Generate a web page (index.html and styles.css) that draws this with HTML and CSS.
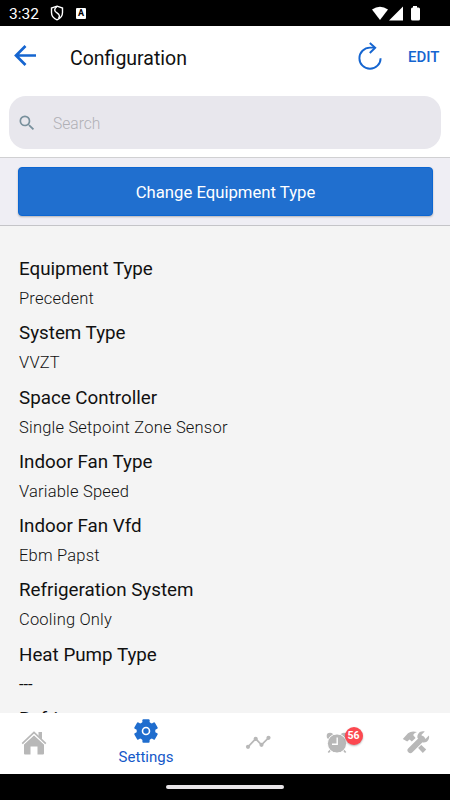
FILE: index.html
```html
<!DOCTYPE html>
<html lang="en">

<head>
    <meta charset="UTF-8">
    <meta name="viewport" content="width=device-width, initial-scale=1.0">
    <title>Configuration</title>
    <link rel="stylesheet" href="styles.css">
</head>

<body>
    <div class="statusbar">
        <span class="clock">3:32</span>
        <svg class="shield" width="14" height="16" viewBox="0 0 14 16" fill="none" stroke="#fff" stroke-width="1.4">
            <path d="M7 1.200 L12.500 3 V7.500 C12.500 11 10.200 13.600 7 14.800 C3.800 13.600 1.500 11 1.500 7.500 V3 Z" />
            <path d="M7 1.500 C3.800 4 4 6 7 7.800 C10 9.600 9.800 12 8.500 13.500" />
        </svg>
        <span class="a-icon">A</span>
        <svg class="signals" width="50" height="16" viewBox="0 0 50 16" fill="#fff">
            <path d="M0 3.500 Q8 -2.200 16 3.500 L8 14 Z" />
            <path d="M31 0.500 V14.500 H17 Z" />
            <path d="M41 0 H45 V1.500 H46.500 Q48 1.500 48 3 V13 Q48 14.500 46.500 14.500 H40.500 Q39 14.500 39 13 V3 Q39 1.500 40.500 1.500 H41 Z" />
        </svg>
    </div>

    <header class="toolbar">
        <svg class="back" width="23" height="21" viewBox="0 0 23 21" fill="none" stroke="#1565d0" stroke-width="2.700">
            <path d="M22 10.500 H2 M11.500 1 L2 10.500 L11.500 20" />
        </svg>
        <h1>Configuration</h1>
        <svg class="refresh" width="24" height="28" viewBox="0 0 24 28" fill="none" stroke="#1565d0" stroke-width="1.900">
            <path d="M17 5.600 H12 A10.600 10.600 0 1 0 22.600 16.200" />
            <path d="M11.800 1 L17.200 5.800 L11.800 11" />
        </svg>
        <a class="edit">EDIT</a>
    </header>

    <div class="search-area">
        <div class="search">
            <svg width="20" height="20" viewBox="0 0 24 24" fill="#78909c">
                <path d="M15.500 14h-.79l-.28-.27A6.471 6.471 0 0 0 16 9.500 6.500 6.500 0 1 0 9.500 16c1.610 0 3.090-.59 4.230-1.570l.27.28v.79l5 4.990L20.490 19l-4.990-5zm-6 0C7.010 14 5 11.990 5 9.500S7.010 5 9.500 5 14 7.010 14 9.500 11.990 14 9.500 14z" />
            </svg>
            <span>Search</span>
        </div>
    </div>

    <div class="action">
        <button class="change-btn">Change Equipment Type</button>
    </div>

    <main class="list">
        <div class="item">
            <h2>Equipment Type</h2>
            <p>Precedent</p>
        </div>
        <div class="item">
            <h2>System Type</h2>
            <p>VVZT</p>
        </div>
        <div class="item">
            <h2>Space Controller</h2>
            <p>Single Setpoint Zone Sensor</p>
        </div>
        <div class="item">
            <h2>Indoor Fan Type</h2>
            <p>Variable Speed</p>
        </div>
        <div class="item">
            <h2>Indoor Fan Vfd</h2>
            <p>Ebm Papst</p>
        </div>
        <div class="item">
            <h2>Refrigeration System</h2>
            <p>Cooling Only</p>
        </div>
        <div class="item">
            <h2>Heat Pump Type</h2>
            <p class="empty">---</p>
        </div>
        <div class="item">
            <h2>Refrig</h2>
        </div>
    </main>

    <nav class="tabs">
        <a class="tab">
            <svg width="26" height="24" viewBox="0 0 26 24" fill="#b8b8b8">
                <path d="M13 4 L23 13 V22.500 Q23 23.500 22 23.500 H16.500 V15.500 H9.500 V23.500 H4 Q3 23.500 3 22.500 V13 Z" />
                <path d="M1.200 12.600 L13 1.500 L24.800 12.600" fill="none" stroke="#fff" stroke-width="4" />
                <path d="M17.500 1 H21 V8.500 L17.500 5.200 Z" />
                <path d="M1.200 12.600 L13 1.500 L24.800 12.600" fill="none" stroke="#b8b8b8" stroke-width="1.700" />
            </svg>
        </a>
        <a class="tab active">
            <svg width="24" height="24" viewBox="0 0 24 24">
                <g fill="#1f6dce">
                    <circle cx="12" cy="12" r="9.400" />
                    <rect x="8.400" y="0.200" width="7.200" height="23.600" rx="1" />
                    <rect x="8.400" y="0.200" width="7.200" height="23.600" rx="1" transform="rotate(60 12 12)" />
                    <rect x="8.400" y="0.200" width="7.200" height="23.600" rx="1" transform="rotate(120 12 12)" />
                </g>
                <circle cx="12" cy="12" r="3.500" fill="none" stroke="#fff" stroke-width="1.600" />
            </svg>
            <span>Settings</span>
        </a>
        <a class="tab chart">
            <svg width="26" height="16" viewBox="0 0 26 16" fill="#b8b8b8">
                <path d="M3 12.800 L10.700 4.800 L16.500 10.800 L23.500 3.800" fill="none" stroke="#b8b8b8" stroke-width="1.700" />
                <circle cx="3" cy="12.800" r="2.100" />
                <circle cx="10.700" cy="4.800" r="2.100" />
                <circle cx="16.500" cy="10.800" r="2.100" />
                <circle cx="23.500" cy="3.800" r="2.100" />
            </svg>
        </a>
        <a class="tab alarm">
            <svg width="22" height="22" viewBox="0 0 22 22" fill="#b8b8b8">
                <circle cx="4" cy="4" r="3.300" />
                <circle cx="18" cy="4" r="3.300" />
                <path d="M5 17.500 L2.300 20.500 M17 17.500 L19.700 20.500" stroke="#b8b8b8" stroke-width="1.800" />
                <circle cx="11" cy="11.500" r="9.600" stroke="#fff" stroke-width="1" />
                <path d="M11.200 5.500 V12.200 H6" fill="none" stroke="#fff" stroke-width="1.400" />
            </svg>
            <span class="badge">56</span>
        </a>
        <a class="tab tools">
            <svg width="28" height="24" viewBox="0 0 28 24" fill="#b8b8b8">
                <path d="M0.800 9 L6 3.200 Q9.500 0.500 15 2 Q11.500 3.200 11.300 5.300 L13.600 8 L9.800 11.500 L7.600 9.400 L5.200 11.500 Z" />
                <path d="M18.600 14.200 L24.200 19.500 L20.800 23 L15.700 17.500 Z" />
                <path d="M8.300 20 L21 8" fill="none" stroke="#fff" stroke-width="7.800" />
                <path d="M8.400 20.200 L20 8.800" fill="none" stroke="#b8b8b8" stroke-width="5.800" stroke-linecap="round" />
                <path d="M22.800 1.600 L19.500 4.800 L20.500 8 L23.700 8.700 L26.900 5.600 C28 9.500 25 13.200 20.800 12.500 L15.500 8 C14.800 3.500 18.500 0.300 22.800 1.600 Z" />
            </svg>
        </a>
    </nav>

    <div class="homebar">
        <div class="pill"></div>
    </div>
</body>

</html>
```
FILE: styles.css
```css
* {
    box-sizing: border-box;
}

body {
    display: flex;
    flex-direction: column;
    width: 450px;
    height: 800px;
    margin: 0;
    overflow: hidden;
    background-color: #fff;
    font-family: Roboto, "Liberation Sans", sans-serif;
    color: #111;
}

h1,
h2,
p {
    margin: 0;
    font-weight: 400;
}

svg {
    display: block;
    flex-shrink: 0;
}

.statusbar {
    display: flex;
    flex: 0 0 26px;
    align-items: center;
    padding: 0 28px 0 9px;
    background-color: #000;
    color: #fff;
}

.clock {
    width: 41px;
    padding-top: 2px;
    font-size: 15.5px;
}

.a-icon {
    width: 10px;
    height: 11px;
    margin-left: 12px;
    border-radius: 1px;
    background-color: #fff;
    color: #000;
    font-size: 9px;
    font-weight: 700;
    line-height: 11px;
    text-align: center;
}

.signals {
    margin-top: 1px;
    margin-left: auto;
}

/* header */
.toolbar {
    display: flex;
    flex: 0 0 60px;
    align-items: center;
    padding: 0 10px 0 14px;
}

.back {
    margin-bottom: 1px;
}

.toolbar h1 {
    margin-left: 33px;
    padding-top: 4px;
    font-size: 19.5px;
}

.refresh {
    margin-bottom: 1px;
    margin-left: auto;
}

.edit {
    width: 32px;
    margin-left: 26px;
    padding-top: 2px;
    color: #1565d0;
    font-size: 15px;
    font-weight: 500;
}

.search-area {
    flex: 0 0 72px;
    padding: 10px 9px 0;
    border-bottom: 1px solid #d0d0d2;
}

.search {
    display: flex;
    align-items: center;
    height: 53px;
    padding-left: 8px;
    border-radius: 17px;
    background-color: #e8e7ed;
}

.search span {
    margin-left: 16px;
    padding-top: 2px;
    color: #b0b0b5;
    font-size: 15.6px;
    font-weight: 300;
}

.action {
    flex: 0 0 68px;
    padding: 9px 17px 0 18px;
    border-bottom: 1px solid #c4c4c8;
    background-color: #efeef4;
}

.change-btn {
    display: block;
    width: 100%;
    height: 49px;
    padding: 2px 0 0;
    border: 1px solid #0c66d2;
    border-radius: 4px;
    background-color: #206fcf;
    box-shadow: 0 1px 2px rgba(0, 0, 0, 0.25);
    color: #fff;
    font-family: inherit;
    font-size: 16.7px;
}

/* settings list */
.list {
    flex: 1 1 0;
    min-height: 0;
    padding: 28px 19px 0;
    overflow: hidden;
    background-color: #f4f4f4;
}

.item {
    height: 64.3px;
}

.item h2 {
    font-size: 18.8px;
    line-height: 30px;
}

.item p {
    font-size: 16.5px;
    font-weight: 300;
    line-height: 29px;
    letter-spacing: 0.2px;
}

.item .empty {
    font-weight: 400;
    letter-spacing: 0;
}

/* bottom navigation */
.tabs {
    display: flex;
    flex: 0 0 61px;
    justify-content: center;
    overflow: hidden;
    background-color: #fff;
}

.tab {
    position: relative;
    display: flex;
    flex: 0 0 79px;
    flex-direction: column;
    align-items: center;
    justify-content: center;
    padding-bottom: 2px;
}

.tab.active {
    flex-basis: 145px;
    justify-content: flex-start;
    padding-top: 6px;
    color: #1558c8;
    font-size: 15px;
}

.tab.active span {
    margin-top: 5px;
}

.tab.chart {
    padding-bottom: 4px;
}

.tab.tools {
    padding-bottom: 3px;
}

.badge {
    position: absolute;
    top: 14px;
    left: 47px;
    width: 18px;
    height: 18px;
    border-radius: 50%;
    background-color: #fc4850;
    box-shadow: 0 1px 2px rgba(0, 0, 0, 0.3);
    color: #fff;
    font-size: 10.5px;
    font-weight: 700;
    line-height: 18px;
    text-align: center;
}

.homebar {
    display: flex;
    flex: 0 0 26px;
    align-items: center;
    justify-content: center;
    background-color: #000;
}

.pill {
    width: 118px;
    height: 4px;
    border-radius: 2px;
    background-color: #e8e4e8;
}
```
